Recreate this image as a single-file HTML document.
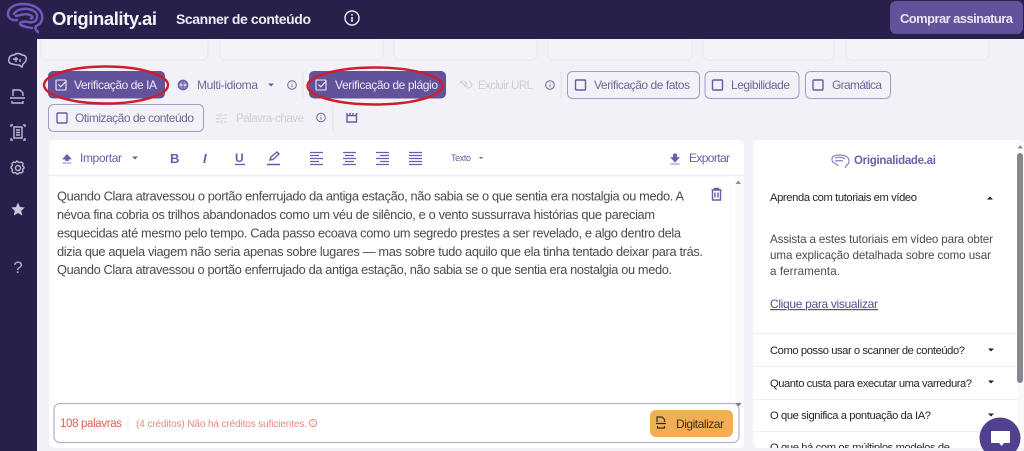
<!DOCTYPE html>
<html lang="pt"><head><meta charset="utf-8"><title>Originality.ai</title>
<style>
html,body{margin:0;padding:0;width:1024px;height:451px;overflow:hidden;background:#f2f1f7}
svg{display:block;font-family:"Liberation Sans",sans-serif;filter:blur(.35px)}
.chip{font-size:12px;fill:#6f6a94}
.w{font-size:12px;fill:#ebe8f5}
.off{font-size:11.5px;fill:#cfced9}
.ln{fill:none;stroke:#6b5ba6;stroke-width:1.4}
.tb{font-size:12px;fill:#6a5ca6}
.body{font-size:12.8px;fill:#4a4a50}
.q{font-size:11.2px;fill:#26262c}
.p{font-size:11.6px;fill:#4a4a50}
.sep{stroke:#eeedf3;stroke-width:1}
.side{fill:none;stroke:#bdb9d2;stroke-width:1.4}
</style></head><body>
<svg width="1024" height="451" viewBox="0 0 1024 451" xmlns="http://www.w3.org/2000/svg">
<defs>
<g id="info"><circle r="4.3" fill="none" stroke="#6f6a94" stroke-width="1"/><path d="M0-.6V2.2M0-2.4V-1.6" stroke="#6f6a94" stroke-width="1"/></g>
<g id="box"><rect width="10" height="10" rx="1" fill="none" stroke="#6b5ba6" stroke-width="1.4"/></g>
<g id="chk"><rect width="10" height="10" rx="1" fill="none" stroke="#eee" stroke-width="1.1"/><path d="M2.5 4.5l2.3 2.3 5-5.3" fill="none" stroke="#eee" stroke-width="1.1"/></g>
<path id="dn" d="M-3-1.5H3L0 1.5Z"/>
<path id="up" d="M-3 1.5H3L0-1.500Z"/>
</defs>

<rect width="1024" height="451" fill="#f2f1f7"/>
<!-- top cards -->
<g fill="#f4f3f8" stroke="#e8e7ef">
<rect x="41" y="25" width="167" height="35" rx="6"/><rect x="220" y="25" width="163" height="35" rx="6"/>
<rect x="394" y="25" width="143" height="35" rx="6"/><rect x="548" y="25" width="144" height="35" rx="6"/>
<rect x="703" y="25" width="131" height="35" rx="6"/><rect x="846" y="25" width="143" height="35" rx="6"/>
</g>
<!-- header -->
<rect width="1024" height="39" fill="#281f4b"/>
<g fill="none" stroke="#6f59bb" stroke-width="2.500" stroke-linecap="round" stroke-linejoin="round">
<path d="M38 32C35.500 30 35 28 36 26 41 24 43 20 42 15 40 7 31 4 23 4 14 4 8 8 8 14 8 18 12 21 17 20"/>
<path d="M14 14C16 10 23 8 28 9 34 10 38 13 37 18 36 22 32 23 28 22 24 21 20 22 20 24 22 27 27 27 32 28"/>
<path d="M16 16C21 15 25 13 30 15 33 16 33 18 31 18.500"/>
</g>
<text x="52" y="25" font-size="18.5" font-weight="700" fill="#f4f3f8" textLength="105">Originality.ai</text>
<text x="176" y="24" font-size="14" font-weight="700" fill="#ecebf3" textLength="135">Scanner de conteúdo</text>
<circle cx="352" cy="18" r="7" fill="none" stroke="#f0eff5" stroke-width="1.4"/><path d="M352 17v5M352 14v1.600" stroke="#f0eff5" stroke-width="1.500"/>
<rect x="890" y="1" width="133" height="33" rx="6" fill="#62529b"/>
<text x="900" y="23" font-size="13" font-weight="700" fill="#e8e5f3" textLength="113">Comprar assinatura</text>

<!-- sidebar -->
<rect y="39" width="37" height="412" fill="#281f4b"/>
<path class="side" d="M13 64c-3 0-5-2-4-5 0-3 3-4 5-4 2-2 6-2 8 0 3 0 5 2 4 5 0 2-2 3-3 4l-1 3-3-2c-2 0-4 0-6-1zM13 59h5M16 57v5M20 59v3"/>
<path class="side" d="M13 96v-6h7l3 3v3M10 98h15M12 101v2h11v-2"/>
<path class="side" d="M14 127h8v11h-8zM16 130h4M16 132.500h4M16 135h4M11 127v-2h2M25 127v-2h-2M11 138v2h2M25 138v2h-2"/>
<circle class="side" cx="18" cy="168" r="2.500"/><path class="side" d="M18 162l1.500.5 2-.5 1.500 1.500-.5 2 1.500 1.500v1l-1.500 1.500.5 2-1.500 1.500-2-.5-1.500 1.500h-1l-1.500-1.500-2 .5-1.500-1.500.5-2-1.500-1.500v-1l1.500-1.500-.5-2 1.500-1.500 2 .5 1.500-1.500z"/>
<path d="M18 202.500l2 4.500 4.800.5-3.600 3.200 1 4.800-4.200-2.500-4.200 2.500 1-4.800-3.600-3.200 4.800-.5z" fill="#c9c6d8"/>
<text x="18" y="273" font-size="17" fill="#b5b1ca" text-anchor="middle">?</text>

<!-- chips row 1 -->
<rect x="48" y="71" width="117" height="27.500" rx="5" fill="#62529b"/>
<use href="#chk" x="56" y="80"/>
<text class="w" x="74" y="89" textLength="83">Verificação de IA</text>
<circle cx="183" cy="85" r="4.500" fill="#cfc9e6" stroke="#6b5ba6" stroke-width="1.700"/><path d="M183 80.500v9M179 83h8M179 87h8" stroke="#6b5ba6"/>
<text class="chip" x="197" y="89" textLength="61">Multi-idioma</text>
<use href="#dn" x="271" y="85" fill="#6b5ba6"/>
<use href="#info" x="292" y="85"/>
<path d="M303 72v26" stroke="#e2e1ea"/>
<rect x="309" y="71" width="137" height="27.500" rx="5" fill="#62529b"/>
<use href="#chk" x="316" y="80"/>
<text class="w" x="335" y="89" textLength="103">Verificação de plágio</text>
<path d="M459 84l3-3h2l3 3-3 3M469 81l3 3-1 3-3 1-3-3M460 81l9 8" fill="none" stroke="#d2d1dc" stroke-width="1.100"/>
<text class="off" x="478" y="89" textLength="55">Excluir URL</text>
<use href="#info" x="550" y="85"/>
<path d="M561 72v26" stroke="#e2e1ea"/>
<g fill="none" stroke="#a29cc6">
<rect x="567.500" y="71.500" width="132" height="27" rx="5"/>
<rect x="705" y="71.500" width="94" height="27" rx="5"/>
<rect x="805.500" y="71.500" width="85" height="27" rx="5"/>
<rect x="48.500" y="104.500" width="155" height="27" rx="5"/>
</g>
<use href="#box" x="575.500" y="80"/><text class="chip" x="594" y="89" textLength="96">Verificação de fatos</text>
<use href="#box" x="712.500" y="80"/><text class="chip" x="731" y="89" textLength="59">Legibilidade</text>
<use href="#box" x="813" y="80"/><text class="chip" x="832" y="89" textLength="50">Gramática</text>
<!-- row 2 -->
<use href="#box" x="57" y="113"/><text class="chip" x="75" y="122" textLength="119">Otimização de conteúdo</text>
<path d="M216 115h4M223 115h4M216 118.500h2M221 118.500h6M216 122h5M224 122h3M221 113v4M219 117v3M222 120v4" stroke="#d2d1dc" fill="none"/>
<text class="off" x="236" y="122" textLength="68">Palavra-chave</text>
<use href="#info" x="321" y="117.500"/>
<path d="M333 105v26" stroke="#e2e1ea"/>
<path d="M347 115.500h9.500v6.500h-9.500zM347 113v2.500M350 113v2.500M353 113v2.500M356.500 113v2.500" class="ln"/>

<!-- red ellipses -->
<ellipse cx="106" cy="85" rx="62" ry="18.500" fill="none" stroke="#cc1f2b" stroke-width="2.400"/>
<ellipse cx="375" cy="86" rx="67.500" ry="18.500" fill="none" stroke="#cc1f2b" stroke-width="2.400"/>

<!-- editor card -->
<rect x="49" y="140" width="695" height="308" rx="6" fill="#fff"/>
<path d="M49 175.500h695" stroke="#ecebf5" stroke-width="1.500"/>
<path d="M63 159l4-4.500 4 4.500h-2.500v1.500h-3V159zM62.500 163h9" fill="#6a5ca6" stroke="#6a5ca6" stroke-width=".8"/>
<text class="tb" x="80" y="162" textLength="42">Importar</text>
<use href="#dn" x="135" y="158" fill="#6a5ca6"/>
<text x="170" y="163" font-size="13" font-weight="700" fill="#6a5ca6">B</text>
<text x="203" y="163" font-size="13" font-weight="700" font-style="italic" fill="#6a5ca6">I</text>
<text x="235" y="162" font-size="12" font-weight="700" fill="#6a5ca6">U</text><path d="M235 164.500h10" stroke="#6a5ca6" stroke-width="1.300"/>
<path d="M270 160l1-3 6-5 2 2-6 5.500zM267 164.500h13" class="ln"/>
<g stroke="#6a5ca6" stroke-width="1.200">
<path d="M310 152.500h13M310 155.500h9M310 158.500h13M310 161.500h9M310 164.500h13"/>
<path d="M343 152.500h13M345 155.500h9M343 158.500h13M345 161.500h9M343 164.500h13"/>
<path d="M376 152.500h13M380 155.500h9M376 158.500h13M380 161.500h9M376 164.500h13"/>
<path d="M409 152.500h13M409 155.500h13M409 158.500h13M409 161.500h13M409 164.500h13"/>
</g>
<text x="451" y="161" font-size="9" fill="#6a5ca6" textLength="20">Texto</text>
<use href="#dn" x="481" y="158" fill="#6a5ca6" transform="translate(481 158) scale(.7) translate(-481 -158)"/>
<path d="M675 162l-4-4.500h2.500V154h3v3.500h2.500zM670.500 164h9" fill="#6a5ca6" stroke="#6a5ca6" stroke-width=".8"/>
<text class="tb" x="689" y="162" textLength="41">Exportar</text>

<text class="body" x="57" y="200.500" textLength="627">Quando Clara atravessou o portão enferrujado da antiga estação, não sabia se o que sentia era nostalgia ou medo. A</text>
<text class="body" x="57" y="219" textLength="598">névoa fina cobria os trilhos abandonados como um véu de silêncio, e o vento sussurrava histórias que pareciam</text>
<text class="body" x="57" y="237.500" textLength="624">esquecidas até mesmo pelo tempo. Cada passo ecoava como um segredo prestes a ser revelado, e algo dentro dela</text>
<text class="body" x="57" y="256" textLength="646">dizia que aquela viagem não seria apenas sobre lugares — mas sobre tudo aquilo que ela tinha tentado deixar para trás.</text>
<text class="body" x="57" y="274" textLength="615">Quando Clara atravessou o portão enferrujado da antiga estação, não sabia se o que sentia era nostalgia ou medo.</text>
<path d="M711.500 190h10M714.500 190v-1.500h4v1.500M712.500 190v10h8v-10M715 192.500v5M718 192.500v5" class="ln"/>
<rect x="735" y="177" width="9" height="230" fill="#fafafb"/>
<path d="M735.500 184h5.500l-2.750-3.500z" fill="#8f8f95"/>
<path d="M735.500 403h6l-3 3.500z" fill="#77777e"/>

<!-- footer -->
<rect x="54" y="403.500" width="685" height="39" rx="6" fill="#fff" stroke="#b4b1ca" stroke-width="1.200"/>
<text x="60" y="427" font-size="11.500" fill="#dd5f50" textLength="62">108 palavras</text>
<path d="M128 416v15" stroke="#eeedf3"/>
<text x="136" y="427" font-size="10" fill="#e58a7d" textLength="171">(4 créditos) Não há créditos suficientes.</text>
<circle cx="313" cy="423" r="3.500" fill="none" stroke="#e58a7d"/><path d="M313 422.500v2M313 420.800v.9" stroke="#e58a7d" stroke-width=".8"/>
<rect x="650" y="410" width="83" height="27" rx="6" fill="#f2ae54"/>
<path d="M657 422v-5h5l2.500 2.500v2.500M656 423.500h10M657.500 426v2h7v-2" fill="none" stroke="#3a2c1c" stroke-width="1.200"/>
<text x="676" y="428" font-size="12" fill="#3a2f20" textLength="48">Digitalizar</text>

<!-- right panel -->
<rect x="753" y="140" width="271" height="308" rx="6" fill="#fff"/>
<g fill="none" stroke="#8d7fc4" stroke-width="1.200"><path d="M838 166c-1-2-2-2-4-3-1 0-2-2-2-4 0-3 4-4 8-4 5 0 9 2 9 6 0 3-2 4-3 5l-1 2"/><path d="M835 158c3-1 7-1 10 1M835 161c3 0 5-1 8 0"/></g>
<text x="854" y="164" font-size="11.500" font-weight="700" fill="#6f60ac" textLength="82">Originalidade.ai</text>
<text class="q" x="770" y="201" textLength="147">Aprenda com tutoriais em vídeo</text>
<use href="#up" x="990" y="198" fill="#1e1e22"/>
<text class="p" x="770" y="243" textLength="223">Assista a estes tutoriais em vídeo para obter</text>
<text class="p" x="770" y="259" textLength="221">uma explicação detalhada sobre como usar</text>
<text class="p" x="770" y="275" textLength="70">a ferramenta.</text>
<text x="770" y="308" font-size="12" fill="#5a4b8f" text-decoration="underline" textLength="108">Clique para visualizar</text>
<path class="sep" d="M753 333.500h264M753 366.500h264M753 399.500h264M753 431.500h264"/>
<text class="q" x="770" y="354" textLength="195">Como posso usar o scanner de conteúdo?</text>
<use href="#dn" x="991" y="350" fill="#1e1e22"/>
<text class="q" x="770" y="387" textLength="202">Quanto custa para executar uma varredura?</text>
<use href="#dn" x="991" y="382" fill="#1e1e22"/>
<text class="q" x="770" y="419" textLength="161">O que significa a pontuação da IA?</text>
<use href="#dn" x="991" y="415" fill="#1e1e22"/>
<text class="q" x="770" y="451" textLength="180">O que há com os múltiplos modelos de</text>
<rect x="1017" y="142" width="7" height="306" fill="#fafafb"/>
<path d="M1017.500 148.500h5.500l-2.750-3.500z" fill="#8f8f95"/>
<rect x="1017" y="153" width="6" height="230" rx="3" fill="#87878d"/>
<rect x="744" y="140" width="9" height="311" fill="#f2f1f7"/>
<rect x="37" y="448" width="987" height="3" fill="#f2f1f7"/>
<circle cx="1000" cy="438" r="20.500" fill="#51408f"/>
<path d="M991 431h19v12h-6l-2.500 3-2.500-3h-8z" fill="#fff"/>
</svg>
</body></html>
